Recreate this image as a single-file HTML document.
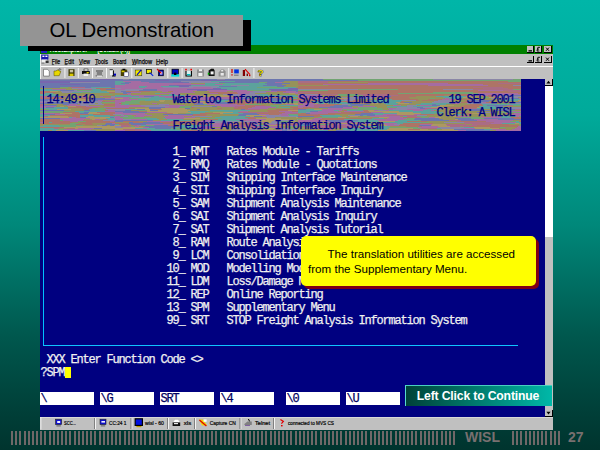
<!DOCTYPE html>
<html><head><meta charset="utf-8"><title>OL Demonstration</title>
<style>
html,body{margin:0;padding:0}
body{width:600px;height:450px;overflow:hidden;position:relative;font-family:"Liberation Sans",sans-serif;
background:linear-gradient(to bottom,rgb(0,182,168) 0px,rgb(0,170,154) 115px,rgb(0,136,122) 225px,rgb(0,88,78) 335px,rgb(0,62,55) 415px,rgb(0,52,46) 450px)}
div,svg{position:absolute}
.win{left:40px;top:45px;width:513px;height:385px;background:#c0c0c0}
.tbar{left:0;top:0;width:513px;height:9px;background:#008000}
.menu{left:0;top:9px;width:513px;height:12px;background:#c0c0c0}
.wline{left:0;top:21px;width:513px;height:1px;background:#fff}
.tool{left:0;top:22px;width:513px;height:12px;background:#c0c0c0}
.term{left:0;top:34px;width:505px;height:338px;background:#000080}
.scroll{left:505px;top:34px;width:8px;height:338px;background:#c0c0c0}
.scroll .wh{left:0;top:7px;width:8px;height:151px;background:#fff}
.task{left:0;top:372px;width:513px;height:13px;background:#c0c0c0}
.noise{left:40px;top:79px}
.wb{width:7px;height:7px;background:#c0c0c0;box-sizing:border-box;border-right:1px solid #000;border-bottom:1px solid #000}
.wb svg{left:0;top:0}
.sb{left:0;width:8px;height:7px;background:#c0c0c0;box-sizing:border-box;border-right:1px solid #000;border-bottom:1px solid #000}

.t{font-family:"Liberation Mono",monospace;font-size:12px;letter-spacing:-1.2px;line-height:13px;height:13px;white-space:pre;color:#f0f0f0;-webkit-text-stroke:0.25px}
.t.h{color:#000080}
.t.d{color:#000060}
.fld{top:392px;width:54px;height:13px;background:#fff}
.shadow{left:28px;top:20px;width:223px;height:31px;background:#000}
.title{left:20px;top:15px;width:223px;height:31px;background:#949494}
.title span{position:absolute;left:29.5px;top:3px;font-size:20.4px;line-height:24px;color:#000;white-space:nowrap}
.call-sh{left:304px;top:239px;width:235px;height:50px;border-radius:5px;background:#800014}
.call{left:301px;top:236px;width:235px;height:50px;border-radius:5px;background:#ffff00}
.call span{position:absolute;font-size:11.6px;line-height:14px;color:#000;white-space:nowrap}
.btn{left:405px;top:385px;width:147px;height:21px;background:linear-gradient(to right,#004238,#00b8a8);box-sizing:border-box;border-top:1px solid #48d0c0;border-left:1px solid #58d8d0}
.btn span{position:absolute;left:-1px;width:146px;top:3px;text-align:center;font-size:12.2px;letter-spacing:-0.16px;line-height:14px;font-weight:bold;color:#fff;white-space:nowrap}
.bars{top:431px;height:14px}
.ft{font-weight:bold;font-size:14px;line-height:16px;color:#787070;top:429px;white-space:nowrap}
</style></head><body>
<div style="left:40px;top:54px;width:1px;height:25px;background:#f0f0f0;z-index:1"></div>
<div class="win">
 <div class="tbar"></div>
 <div class="menu"></div>
 <div class="wline"></div>
 <div class="tool"></div>
 <div class="term"></div>
 <div class="scroll"><div class="wh"></div><div class="sb" style="top:0"><svg width="7" height="6" style="left:0;top:0"><path d="M3.5 1.8L5.6 4.4H1.4Z" fill="#000"/></svg></div><div class="sb" style="top:331px"><svg width="7" height="6" style="left:0;top:0"><path d="M3.5 4.4L5.6 1.8H1.4Z" fill="#000"/></svg></div></div>
 <div class="task"></div>
</div>
<div class="wb" style="left:527px;top:46px"><svg width="6" height="6"><rect x="1.5" y="4.2" width="3.5" height="1.3" fill="#000"/></svg></div><div class="wb" style="left:535px;top:46px"><svg width="6" height="6"><path d="M5 1.3H2.9L2 5H4.3M2.5 3.1H4" stroke="#000" stroke-width=".9" fill="none"/></svg></div><div class="wb" style="left:544px;top:46px;width:8px"><svg width="7" height="6"><path d="M2 1.6L5 4.8M5 1.6L2 4.8" stroke="#000" stroke-width="1" fill="none"/></svg></div><div class="wb" style="left:527px;top:56px"><svg width="6" height="6"><rect x="1.5" y="4.2" width="3.5" height="1.3" fill="#000"/></svg></div><div class="wb" style="left:535px;top:56px"><svg width="6" height="6"><path d="M5 1.3H2.9L2 5H4.3M2.5 3.1H4" stroke="#000" stroke-width=".9" fill="none"/></svg></div><div class="wb" style="left:544px;top:56px;width:8px"><svg width="7" height="6"><path d="M2 1.6L5 4.8M5 1.6L2 4.8" stroke="#000" stroke-width="1" fill="none"/></svg></div>
<svg style="left:40px;top:45px" width="230" height="21" viewBox="40 45 230 21" font-family="Liberation Sans">
<g fill="#fff" font-size="7" font-weight="bold"><text x="49.7" y="52" textLength="38" lengthAdjust="spacingAndGlyphs">HostExplorer</text><text x="94" y="52" textLength="36" lengthAdjust="spacingAndGlyphs">- [Default (A)]</text></g>
<rect x="41" y="47" width="6" height="6" fill="#2020c0"/><rect x="42" y="48" width="3" height="2" fill="#e0e0ff"/>
<rect x="41.2" y="54.6" width="7.2" height="5" fill="#1818b0"/><rect x="42.4" y="55.6" width="2" height="1.4" fill="#fff"/><rect x="45.4" y="55.6" width="2" height="1.4" fill="#fff"/><rect x="42" y="59.6" width="5" height="3" fill="#f0f0f0"/><rect x="45.6" y="60.6" width="3" height="2.4" fill="#303030"/><rect x="41.4" y="62.6" width="3" height="1" fill="#707070"/>
<g fill="#000" font-size="7.4" stroke="#000" stroke-width=".25"><text x="51.8" y="63.6" textLength="8.4" lengthAdjust="spacingAndGlyphs">File</text><text x="64.6" y="63.6" textLength="9.4" lengthAdjust="spacingAndGlyphs">Edit</text><text x="79" y="63.6" textLength="11" lengthAdjust="spacingAndGlyphs">View</text><text x="95" y="63.6" textLength="13" lengthAdjust="spacingAndGlyphs">Tools</text><text x="113" y="63.6" textLength="13.4" lengthAdjust="spacingAndGlyphs">Board</text><text x="132" y="63.6" textLength="20" lengthAdjust="spacingAndGlyphs">Window</text><text x="156" y="63.6" textLength="12" lengthAdjust="spacingAndGlyphs">Help</text></g>
<g stroke="#000" stroke-width=".6"><path d="M51.8 64.6h2.4M64.6 64.6h2.6M79 64.6h3M95 64.6h2.6M132 64.6h4M156 64.6h3"/></g>
</svg>

<svg style="left:40px;top:417px" width="513" height="13" viewBox="40 417 513 13" font-family="Liberation Sans">
<rect x="40" y="417" width="513" height="1" fill="#d8d8d8"/><rect x="40.4" y="417" width="1" height="12.5" fill="#f0f0f0"/>
<g fill="#f4f4f4"><rect x="95" y="418" width="1" height="11"/><rect x="131.4" y="418" width="1" height="11"/><rect x="168" y="418" width="1" height="11"/><rect x="195" y="418" width="1" height="11"/><rect x="240.4" y="418" width="1" height="11"/><rect x="274" y="418" width="1" height="11"/></g>
<g fill="#808080"><rect x="94" y="418" width="1" height="11"/><rect x="130.4" y="418" width="1" height="11"/><rect x="167" y="418" width="1" height="11"/><rect x="194" y="418" width="1" height="11"/><rect x="239.4" y="418" width="1" height="11"/><rect x="273" y="418" width="1" height="11"/></g>
<rect x="55.6" y="419.2" width="6" height="5.4" fill="#1010d0" stroke="#202020" stroke-width=".6"/><rect x="57.2" y="421" width="3" height="2" fill="#f0f0ff"/><rect x="56.4" y="425.4" width="4.4" height="1" fill="#606060"/>
<rect x="100" y="419.2" width="6" height="5.4" fill="#1010d0" stroke="#202020" stroke-width=".6"/><rect x="101.4" y="421" width="3.6" height="1.6" fill="#f0f0ff"/><rect x="100.8" y="425.4" width="4.4" height="1" fill="#606060"/>
<rect x="135.2" y="418.8" width="7.2" height="6.6" fill="#0010e0" stroke="#000" stroke-width="1.2"/><rect x="136.4" y="426" width="5" height="1.2" fill="#c0a000"/>
<path d="M173 422.4l2-2.6h3l2 2.6z" fill="#fff"/><rect x="172.6" y="422.4" width="7.6" height="3.6" fill="#101010"/><rect x="174" y="423" width="4" height="1.2" fill="#e8e8e8"/>
<path d="M199 419.4h4l4.4 6H202z" fill="#f0d800"/><path d="M199.4 420l7 6" stroke="#e00000" stroke-width="1.2"/><rect x="203.6" y="419.4" width="3" height="2.4" fill="#fff"/>
<path d="M244.4 424l3-2.6h4.4v3.6h-7.4z" fill="#808080"/><path d="M248.4 419l1.2 2.4" stroke="#000" stroke-width="1"/><rect x="245" y="425" width="5" height="1" fill="#8060a0"/>
<path d="M280.4 419.4l3 2-2 2.2" stroke="#e00000" stroke-width="1.2" fill="none"/><rect x="281" y="425" width="1.6" height="1.4" fill="#e00000"/>
<g fill="#000" font-size="5.6" stroke="#000" stroke-width=".2"><text x="64" y="425.2" textLength="12" lengthAdjust="spacingAndGlyphs">SCC...</text><text x="109" y="425.2" textLength="17.4" lengthAdjust="spacingAndGlyphs">CC:24 1</text><text x="145" y="425.2" textLength="19" lengthAdjust="spacingAndGlyphs">wisl - 60</text><text x="183.8" y="425.2" textLength="7.4" lengthAdjust="spacingAndGlyphs">xls</text><text x="209.8" y="425.2" textLength="26" lengthAdjust="spacingAndGlyphs">Capture CN</text><text x="255" y="425.2" textLength="15" lengthAdjust="spacingAndGlyphs">Telnet</text><text x="288" y="425.2" textLength="46" lengthAdjust="spacingAndGlyphs">connected to MVS CS</text></g>
</svg>

<svg style="left:40px;top:66px" width="230" height="13" viewBox="40 66 230 13">
<g fill="#f4f4f4"><rect x="64.4" y="68" width="1" height="10"/><rect x="77.8" y="68" width="1" height="10"/><rect x="92" y="68" width="1" height="10"/><rect x="106" y="68" width="1" height="10"/><rect x="131.3" y="68" width="1" height="10"/><rect x="167.3" y="68" width="1" height="10"/><rect x="181.6" y="68" width="1" height="10"/><rect x="228.2" y="68" width="1" height="10"/><rect x="253.4" y="68" width="1" height="10"/></g>
<path d="M43.5 69.3h4l1.8 1.8v5h-5.8z" fill="#fff" stroke="#505050" stroke-width=".6"/>
<path d="M54 71h2.2l.8-1h2v1h1.6v1l-1.4 3.7H54z" fill="#e8d800" stroke="#504800" stroke-width=".5"/>
<path d="M58.6 69.4l1.6-.6.8 1" stroke="#000" stroke-width=".6" fill="none"/>
<rect x="68.5" y="69.2" width="6" height="6.8" fill="#383400"/><rect x="69.8" y="69.8" width="3.4" height="2.6" fill="#c8c0a0"/><rect x="69.6" y="73.6" width="3.8" height="2.4" fill="#d8c800"/>
<rect x="84" y="69" width="4" height="2" fill="#fff" stroke="#000" stroke-width=".5"/><rect x="82" y="71" width="7.8" height="3" fill="#101010"/><rect x="83.6" y="73.6" width="4.6" height="2.4" fill="#f0f0f0"/><rect x="86.6" y="72" width="2.2" height="1.4" fill="#e0d000"/>
<path d="M96 70h7v2h-1v3h1v1.4h-7.4V75h1.2v-3H96z" fill="#808080"/><rect x="97" y="75.6" width="5.4" height="1.2" fill="#e8e8e8"/>
<path d="M109.6 69.6h3l1.2 1.2" stroke="#202020" stroke-width=".8" fill="none"/><rect x="110" y="70.6" width="3" height="4.6" fill="#f0f0f0"/><path d="M113.4 71v5M112 76h3.6" stroke="#000" stroke-width="1"/><rect x="113.8" y="73.6" width="2.2" height="2" fill="#0000c0"/>
<rect x="120.8" y="69.6" width="6.4" height="6.4" fill="#484000"/><rect x="122.4" y="68.8" width="3" height="1.6" fill="#000"/><rect x="124" y="72" width="4.4" height="4.6" fill="#fff" stroke="#202060" stroke-width=".5"/><rect x="121.6" y="70.6" width="3" height="1.6" fill="#d8c800"/>
<rect x="135.2" y="70" width="6.6" height="5.8" fill="#f0e800" stroke="#202020" stroke-width=".5"/><path d="M137 74.8l4.2-5" stroke="#0000d0" stroke-width="1.1"/>
<rect x="146.4" y="69.6" width="5" height="4" fill="#f0e800" stroke="#000" stroke-width=".7"/><path d="M149.6 72.4l3.6 3.4" stroke="#0020e0" stroke-width="1.1"/>
<rect x="158.4" y="70" width="5" height="5.8" fill="#0000a0" stroke="#000" stroke-width=".6"/><rect x="160" y="71.6" width="2.4" height="3" fill="#d0d0ff"/><path d="M157 69l4.4 4.4" stroke="#e00000" stroke-width="1.1"/>
<rect x="172" y="69.2" width="6.4" height="5" fill="#0000c0" stroke="#000" stroke-width=".7"/><rect x="171.2" y="74.4" width="8" height="2.2" fill="#00d8d8"/><rect x="174" y="72.6" width="2.4" height="2.4" fill="#000"/>
<rect x="185.2" y="68.8" width="1.6" height="1.6" fill="#f00000"/><rect x="190.4" y="68.8" width="1.6" height="1.6" fill="#f00000"/><path d="M186 71v5h5.4v-5" stroke="#000" stroke-width="1.1" fill="#d8f0f0"/><rect x="187" y="74" width="3.4" height="1.4" fill="#00c0c0"/>
<path d="M197 69.6h2v1.6h3v-1.6h2v6.8h-7z" fill="#909090"/><rect x="198.4" y="73" width="4" height="3" fill="#f0f0f0"/><rect x="199" y="69.4" width="3" height="1.6" fill="#f0f0f0"/>
<path d="M208.6 70.4l2.6-1.6h2.4l1 1.6v5.6h-6z" fill="#101010"/><rect x="210.6" y="71.4" width="3" height="3" fill="#f4f4f4"/><path d="M207.8 72.2v3l2.2-1.5z" fill="#00a000"/>
<path d="M218.6 72.4l2.4-3h3l1.6 2v5h-7z" fill="#909090"/><rect x="220.6" y="73" width="3.2" height="2.6" fill="#e8e8e8"/><rect x="221.2" y="70" width="2" height="1.4" fill="#e8e8e8"/>
<rect x="231.4" y="69" width="1.2" height="4" fill="#d00000"/><rect x="231.4" y="74.2" width="1.2" height="1.4" fill="#d00000"/><rect x="234.2" y="69.4" width="4.6" height="4" fill="#0030e0"/><path d="M234 75.2h4.6" stroke="#707070" stroke-width="1"/>
<rect x="242.8" y="70" width="2.2" height="6" fill="#800000"/><path d="M245 69.2l5 5.4" stroke="#e00000" stroke-width="1.1"/><rect x="246.6" y="73.6" width="1.4" height="2.4" fill="#800000"/><rect x="249" y="74.8" width="1.4" height="1.4" fill="#d00000"/>
<text x="257.8" y="76.2" font-family="Liberation Sans" font-weight="bold" font-size="9.5" fill="#f0e000" stroke="#000" stroke-width=".7" paint-order="stroke">?</text>
</svg>

<svg class="noise" width="481" height="52" viewBox="0 0 480 52" preserveAspectRatio="none" shape-rendering="crispEdges" fill="none" stroke-width="1"><path stroke="#96925a" d="M243 2.5h14M241 3.5h16M287 3.5h40M151 4.5h14M249 4.5h8M241 5.5h16M245 6.5h12M257 6.5h30M243 7.5h8M251 7.5h6M28 8.5h3M255 8.5h2M0 9.5h12M12 9.5h20M26 10.5h12M61 11.5h14M18 12.5h3M110 12.5h12M153 12.5h16M187 12.5h6M16 13.5h6M101 13.5h30M155 13.5h12M226 13.5h16M13 14.5h16M29 14.5h30M59 14.5h16M75 14.5h8M91 14.5h24M140 14.5h30M215 14.5h30M245 14.5h3M16 15.5h8M24 15.5h8M38 15.5h10M48 15.5h8M56 15.5h12M72 15.5h3M75 15.5h5M91 15.5h8M99 15.5h30M142 15.5h8M150 15.5h3M153 15.5h30M228 15.5h29M18 16.5h24M56 16.5h19M145 16.5h3M255 16.5h2M281 16.5h4M403 16.5h12M26 17.5h10M54 17.5h6M281 17.5h3M294 17.5h30M375 17.5h20M435 17.5h12M22 18.5h14M36 18.5h6M47 18.5h24M238 18.5h19M287 18.5h14M335 18.5h3M368 18.5h30M398 18.5h4M432 18.5h8M477 18.5h3M24 19.5h8M38 19.5h3M256 19.5h1M331 19.5h8M369 19.5h20M394 19.5h10M420 19.5h30M150 20.5h4M250 20.5h3M315 20.5h30M377 20.5h10M431 20.5h30M63 21.5h12M125 21.5h14M149 21.5h3M188 21.5h20M318 21.5h8M378 21.5h3M411 21.5h16M451 21.5h6M100 22.5h20M124 22.5h12M185 22.5h8M193 22.5h3M257 22.5h5M363 22.5h30M409 22.5h5M414 22.5h10M448 22.5h30M99 23.5h10M109 23.5h30M328 23.5h3M371 23.5h20M469 23.5h3M55 24.5h3M62 24.5h13M100 24.5h12M117 24.5h5M122 24.5h8M130 24.5h12M142 24.5h12M213 24.5h20M311 24.5h6M337 24.5h6M368 24.5h12M418 24.5h8M456 24.5h4M4 25.5h14M18 25.5h5M37 25.5h3M89 25.5h30M129 25.5h6M135 25.5h16M151 25.5h3M221 25.5h10M231 25.5h14M257 25.5h5M298 25.5h3M329 25.5h16M356 25.5h5M361 25.5h14M405 25.5h24M17 26.5h10M49 26.5h14M145 26.5h16M161 26.5h14M225 26.5h5M322 26.5h14M336 26.5h16M360 26.5h6M376 26.5h3M413 26.5h10M16 27.5h4M24 27.5h4M60 27.5h10M70 27.5h5M177 27.5h4M239 27.5h18M311 27.5h6M334 27.5h12M402 27.5h10M412 27.5h8M462 27.5h18M58 28.5h6M89 28.5h20M154 28.5h8M162 28.5h24M186 28.5h8M312 28.5h5M336 28.5h10M463 28.5h4M28 29.5h14M150 29.5h20M170 29.5h3M173 29.5h4M182 29.5h12M228 29.5h24M267 29.5h20M341 29.5h6M0 30.5h6M31 30.5h5M36 30.5h8M63 30.5h3M147 30.5h10M160 30.5h8M168 30.5h5M173 30.5h8M181 30.5h20M220 30.5h16M342 30.5h6M400 30.5h24M440 30.5h20M24 31.5h20M91 31.5h8M150 31.5h20M210 31.5h12M222 31.5h5M393 31.5h16M409 31.5h20M449 31.5h5M474 31.5h6M30 32.5h5M208 32.5h20M297 32.5h6M396 32.5h8M404 32.5h8M424 32.5h8M432 32.5h30M165 33.5h8M402 33.5h24M426 33.5h10M452 33.5h6M105 34.5h8M113 34.5h12M138 34.5h8M257 34.5h3M403 34.5h20M441 34.5h24M107 35.5h16M167 35.5h20M187 35.5h12M294 35.5h20M393 35.5h6M399 35.5h8M407 35.5h3M410 35.5h3M431 35.5h16M447 35.5h24M92 36.5h4M112 36.5h4M116 36.5h12M166 36.5h16M182 36.5h3M185 36.5h8M193 36.5h5M299 36.5h8M386 36.5h6M392 36.5h20M419 36.5h30M449 36.5h24M104 37.5h20M144 37.5h8M172 37.5h8M301 37.5h8M317 37.5h12M359 37.5h3M384 37.5h8M392 37.5h8M400 37.5h12M428 37.5h8M436 37.5h14M110 38.5h5M115 38.5h10M155 38.5h20M215 38.5h12M235 38.5h20M261 38.5h16M308 38.5h30M400 38.5h20M117 39.5h6M240 39.5h10M250 39.5h7M257 39.5h16M343 39.5h3M398 39.5h8M406 39.5h8M44 40.5h8M60 40.5h3M119 40.5h8M143 40.5h20M163 40.5h3M248 40.5h8M402 40.5h8M410 40.5h4M113 41.5h8M151 41.5h14M254 41.5h3M472 41.5h8M99 42.5h8M255 42.5h2M386 42.5h30M32 43.5h8M75 43.5h14M322 43.5h20M388 43.5h3M391 43.5h12M38 44.5h4M52 44.5h14M171 44.5h3M218 44.5h8M392 44.5h20M412 44.5h12M0 45.5h30M42 45.5h3M53 45.5h12M130 45.5h10M140 45.5h14M220 45.5h4M272 45.5h8M425 45.5h6M468 45.5h12M0 46.5h3M43 46.5h14M67 46.5h3M89 46.5h4M99 47.5h6M186 47.5h8M242 47.5h5M314 47.5h5M349 47.5h16M419 47.5h3M171 48.5h30M239 48.5h12M251 48.5h5M256 48.5h1M257 48.5h16M329 48.5h8M464 48.5h12M19 49.5h8M183 49.5h10M193 49.5h6M257 49.5h6M263 49.5h4M267 49.5h3M278 49.5h24M458 49.5h16M51 50.5h24M159 50.5h30M189 50.5h3M233 50.5h6M257 50.5h24M291 50.5h3M294 50.5h8M387 50.5h14M465 50.5h6M8 51.5h4M56 51.5h14M70 51.5h4M74 51.5h1M161 51.5h10M287 51.5h8M449 51.5h6"/><path stroke="#a56ca2" d="M83 2.5h18M91 3.5h18M235 3.5h6M89 4.5h24M113 4.5h14M127 4.5h24M327 4.5h80M85 5.5h40M125 5.5h40M175 5.5h8M282 5.5h80M362 5.5h80M75 6.5h40M115 6.5h6M121 6.5h8M387 6.5h60M75 7.5h24M107 7.5h14M75 8.5h14M89 8.5h10M105 8.5h18M153 8.5h18M81 9.5h14M95 9.5h24M119 9.5h40M159 9.5h14M12 10.5h14M75 10.5h10M117 10.5h30M117 11.5h40M167 11.5h40M437 11.5h25M122 12.5h3M125 12.5h3M133 12.5h10M143 12.5h4M147 12.5h6M169 12.5h12M181 12.5h6M193 12.5h20M225 12.5h4M229 12.5h8M245 12.5h10M91 13.5h10M131 13.5h12M143 13.5h12M197 13.5h10M207 13.5h3M242 13.5h15M87 14.5h4M120 14.5h20M170 14.5h8M198 14.5h5M203 14.5h6M254 14.5h3M437 14.5h40M88 15.5h3M135 15.5h3M199 15.5h5M427 15.5h53M91 16.5h30M148 16.5h12M257 16.5h24M427 16.5h14M441 16.5h6M455 16.5h5M22 17.5h4M60 17.5h3M99 17.5h5M119 17.5h3M122 17.5h8M130 17.5h14M144 17.5h16M257 17.5h24M452 17.5h6M75 18.5h16M125 18.5h24M149 18.5h24M173 18.5h30M257 18.5h30M32 19.5h6M65 19.5h10M83 19.5h6M133 19.5h8M151 19.5h10M161 19.5h6M167 19.5h14M181 19.5h20M269 19.5h14M404 19.5h4M478 19.5h2M80 20.5h8M88 20.5h10M159 20.5h6M165 20.5h16M201 20.5h12M401 20.5h12M479 20.5h1M58 21.5h5M75 21.5h16M251 21.5h3M254 21.5h3M257 21.5h8M75 22.5h10M169 22.5h4M216 22.5h10M0 23.5h5M75 23.5h6M149 23.5h14M169 23.5h5M442 23.5h3M75 24.5h4M112 24.5h5M167 24.5h8M262 24.5h10M410 24.5h8M29 25.5h8M75 25.5h6M167 25.5h30M245 25.5h8M262 25.5h14M27 26.5h6M33 26.5h8M75 26.5h12M87 26.5h14M125 26.5h20M175 26.5h30M257 26.5h16M352 26.5h8M379 26.5h12M0 27.5h16M46 27.5h14M75 27.5h20M95 27.5h10M129 27.5h8M137 27.5h3M181 27.5h14M215 27.5h16M257 27.5h16M317 27.5h5M322 27.5h12M0 28.5h6M64 28.5h11M75 28.5h14M125 28.5h14M212 28.5h24M257 28.5h5M302 28.5h10M208 29.5h20M287 29.5h30M347 29.5h8M281 30.5h20M348 30.5h4M366 30.5h20M68 31.5h7M281 31.5h12M298 31.5h3M333 31.5h4M345 31.5h3M372 31.5h10M390 31.5h3M65 32.5h10M200 32.5h8M239 32.5h12M277 32.5h20M303 32.5h16M319 32.5h4M470 32.5h10M75 33.5h8M107 33.5h20M244 33.5h13M270 33.5h30M330 33.5h12M0 34.5h6M6 34.5h8M75 34.5h30M241 34.5h8M269 34.5h4M273 34.5h6M279 34.5h5M284 34.5h3M473 34.5h7M15 35.5h10M83 35.5h24M219 35.5h10M239 35.5h8M342 35.5h14M373 35.5h6M471 35.5h6M477 35.5h3M96 36.5h16M128 36.5h24M240 36.5h8M334 36.5h12M473 36.5h6M479 36.5h1M75 37.5h8M94 37.5h10M124 37.5h12M136 37.5h8M222 37.5h4M329 37.5h30M416 37.5h12M450 37.5h6M475 37.5h3M32 38.5h4M74 38.5h1M75 38.5h5M125 38.5h30M348 38.5h14M388 38.5h6M440 38.5h20M20 39.5h30M75 39.5h8M126 39.5h10M136 39.5h8M273 39.5h8M346 39.5h20M20 40.5h24M55 40.5h5M75 40.5h8M91 40.5h16M196 40.5h30M271 40.5h8M333 40.5h30M433 40.5h24M23 41.5h20M165 41.5h8M206 41.5h16M257 41.5h30M337 41.5h20M436 41.5h6M442 41.5h30M30 42.5h8M70 42.5h4M107 42.5h24M161 42.5h8M215 42.5h4M257 42.5h24M284 42.5h4M304 42.5h8M445 42.5h12M457 42.5h12M0 43.5h3M207 43.5h20M257 43.5h6M289 43.5h30M453 43.5h8M461 43.5h14M72 44.5h3M174 44.5h20M317 44.5h12M336 44.5h20M450 44.5h3M453 44.5h8M106 45.5h24M172 45.5h12M214 45.5h6M224 45.5h12M296 45.5h24M344 45.5h3M347 45.5h6M379 45.5h12M74 46.5h1M97 46.5h4M170 46.5h14M249 46.5h8M305 46.5h6M317 46.5h5M346 46.5h12M95 47.5h4M159 47.5h24M218 47.5h24M281 47.5h3M381 47.5h16M477 47.5h3M103 48.5h6M157 48.5h4M161 48.5h10M231 48.5h8M321 48.5h3M377 48.5h8M385 48.5h14M476 48.5h4M38 49.5h16M151 49.5h24M175 49.5h8M199 49.5h3M322 49.5h10M420 49.5h14M474 49.5h6M24 50.5h3M27 50.5h24M281 50.5h10M451 50.5h14M471 50.5h9M75 51.5h10M221 51.5h20M417 51.5h8M455 51.5h5M460 51.5h10M470 51.5h10"/><path stroke="#5ca29c" d="M75 2.5h8M171 2.5h24M75 3.5h10M75 4.5h6M165 4.5h14M185 4.5h40M75 5.5h10M165 5.5h10M183 5.5h30M213 5.5h14M151 6.5h40M209 6.5h14M99 7.5h8M121 7.5h18M197 7.5h40M51 8.5h20M99 8.5h6M177 8.5h40M241 8.5h14M181 9.5h8M189 9.5h40M229 9.5h18M0 10.5h12M52 10.5h8M187 10.5h10M197 10.5h8M205 10.5h24M0 11.5h20M53 11.5h8M51 12.5h16M32 13.5h10M50 13.5h5M55 13.5h14M5 14.5h8M115 14.5h5M0 15.5h16M129 15.5h6M218 15.5h10M0 16.5h10M10 16.5h8M75 16.5h16M121 16.5h16M137 16.5h8M220 16.5h5M225 16.5h30M75 17.5h24M114 17.5h5M226 17.5h8M248 17.5h9M395 17.5h30M111 18.5h14M402 18.5h20M109 19.5h24M251 19.5h5M408 19.5h12M98 20.5h24M122 20.5h10M147 20.5h3M273 20.5h24M345 20.5h6M467 20.5h12M105 21.5h6M115 21.5h4M176 21.5h12M239 21.5h12M279 21.5h10M289 21.5h3M292 21.5h12M331 21.5h30M457 21.5h20M28 22.5h3M31 22.5h3M136 22.5h6M142 22.5h3M173 22.5h12M231 22.5h16M270 22.5h30M330 22.5h30M236 23.5h8M275 23.5h30M331 23.5h24M277 24.5h6M287 24.5h24M343 24.5h14M380 24.5h30M85 25.5h4M164 25.5h3M345 25.5h3M348 25.5h8M375 25.5h16M395 25.5h10M441 25.5h20M461 25.5h8M469 25.5h11M240 26.5h12M252 26.5h5M442 26.5h4M346 27.5h20M372 27.5h24M438 27.5h10M448 27.5h6M14 28.5h14M241 28.5h8M333 28.5h3M439 28.5h24M0 29.5h4M4 29.5h24M436 29.5h30M9 30.5h8M49 30.5h6M85 30.5h12M265 30.5h8M386 30.5h14M50 31.5h5M170 31.5h24M194 31.5h16M257 31.5h24M293 31.5h5M306 31.5h16M348 31.5h24M382 31.5h8M35 32.5h30M148 32.5h20M184 32.5h16M257 32.5h12M358 32.5h24M382 32.5h14M412 32.5h12M39 33.5h5M151 33.5h14M193 33.5h5M257 33.5h8M372 33.5h30M150 34.5h10M183 34.5h20M332 34.5h24M380 34.5h8M388 34.5h5M0 35.5h3M49 35.5h4M334 35.5h8M413 35.5h10M0 36.5h10M40 36.5h16M56 36.5h10M66 36.5h4M248 36.5h9M279 36.5h20M322 36.5h4M0 37.5h4M40 37.5h3M43 37.5h5M54 37.5h21M180 37.5h30M256 37.5h1M281 37.5h8M289 37.5h12M362 37.5h4M461 37.5h14M29 38.5h3M175 38.5h30M460 38.5h10M66 39.5h9M105 39.5h12M123 39.5h3M160 39.5h8M182 39.5h5M187 39.5h5M192 39.5h16M331 39.5h12M68 40.5h7M107 40.5h4M111 40.5h8M127 40.5h16M178 40.5h10M188 40.5h8M303 40.5h30M121 41.5h30M173 41.5h30M317 41.5h6M323 41.5h14M357 41.5h4M361 41.5h16M312 42.5h12M324 42.5h6M330 42.5h8M354 42.5h12M475 42.5h3M9 43.5h3M319 43.5h3M342 43.5h30M372 43.5h8M475 43.5h5M329 44.5h3M356 44.5h6M461 44.5h5M466 44.5h8M478 44.5h2M75 45.5h4M168 45.5h4M3 46.5h16M101 46.5h5M140 46.5h30M216 46.5h10M257 46.5h12M0 47.5h20M139 47.5h6M145 47.5h14M319 47.5h30M133 48.5h24M337 48.5h10M423 48.5h10M0 49.5h14M95 49.5h20M302 49.5h20M332 49.5h16M396 49.5h4M0 50.5h4M4 50.5h14M107 50.5h30M302 50.5h30M332 50.5h14M443 50.5h8M0 51.5h8M12 51.5h4M28 51.5h16M111 51.5h30M257 51.5h30M309 51.5h20M329 51.5h8"/><path stroke="#6c76ae" d="M30 0.5h30M75 0.5h8M89 0.5h14M103 0.5h30M133 0.5h14M147 0.5h30M185 0.5h6M191 0.5h30M221 0.5h14M235 0.5h10M245 0.5h10M255 0.5h2M257 0.5h25M0 1.5h20M20 1.5h40M60 1.5h15M75 1.5h40M129 1.5h14M143 1.5h18M185 1.5h18M203 1.5h8M211 1.5h30M241 1.5h16M257 1.5h60M60 2.5h15M101 2.5h40M195 2.5h40M235 2.5h8M60 3.5h15M85 3.5h6M109 3.5h24M143 3.5h6M179 3.5h40M227 3.5h8M0 4.5h40M40 4.5h35M81 4.5h8M225 4.5h24M0 5.5h20M40 5.5h30M70 5.5h5M227 5.5h14M0 6.5h20M20 6.5h20M40 6.5h35M129 6.5h8M223 6.5h8M231 6.5h14M0 7.5h30M30 7.5h40M70 7.5h5M179 7.5h18M237 7.5h6M0 8.5h8M8 8.5h12M45 8.5h6M71 8.5h4M66 10.5h9M103 10.5h14M20 11.5h14M99 11.5h18M251 11.5h6M81 12.5h5M255 12.5h2M83 13.5h4M87 13.5h4M83 14.5h4M460 16.5h20M8 17.5h14M104 17.5h10M344 17.5h6M53 19.5h12M201 19.5h14M231 19.5h8M470 19.5h8M0 20.5h24M54 20.5h21M132 20.5h10M181 20.5h12M193 20.5h8M213 20.5h10M223 20.5h24M0 21.5h8M49 21.5h4M53 21.5h5M139 21.5h5M144 21.5h5M152 21.5h24M208 21.5h20M231 21.5h8M326 21.5h5M427 21.5h24M434 22.5h6M440 22.5h3M443 22.5h5M5 23.5h30M139 23.5h10M174 23.5h16M363 23.5h8M475 23.5h5M0 24.5h20M20 24.5h8M28 24.5h10M157 24.5h6M175 24.5h6M181 24.5h8M233 24.5h8M23 25.5h6M154 25.5h10M309 25.5h20M391 25.5h4M3 26.5h14M293 26.5h14M310 26.5h12M391 26.5h8M446 26.5h20M172 27.5h5M289 27.5h10M299 27.5h12M454 27.5h8M6 28.5h8M109 28.5h8M117 28.5h8M278 28.5h24M376 28.5h6M109 29.5h12M145 29.5h5M379 29.5h5M97 30.5h8M157 30.5h3M201 30.5h4M257 30.5h8M424 30.5h16M460 30.5h14M0 31.5h24M44 31.5h6M85 31.5h6M110 31.5h8M429 31.5h4M433 31.5h16M454 31.5h14M75 32.5h24M269 32.5h8M44 33.5h5M83 33.5h24M436 33.5h6M40 34.5h8M203 34.5h14M265 34.5h4M320 34.5h12M3 35.5h12M123 35.5h30M199 35.5h20M314 35.5h20M198 36.5h8M319 36.5h3M326 36.5h8M214 37.5h8M257 37.5h16M40 38.5h6M70 38.5h4M0 39.5h20M374 39.5h24M414 39.5h16M443 39.5h30M373 40.5h5M378 40.5h24M417 40.5h16M457 40.5h23M75 41.5h30M105 41.5h8M287 41.5h30M380 41.5h8M388 41.5h20M420 41.5h16M75 42.5h8M288 42.5h16M89 43.5h4M103 43.5h3M106 43.5h14M267 43.5h6M66 44.5h6M89 44.5h4M93 44.5h30M214 44.5h4M240 44.5h5M265 44.5h4M65 45.5h10M91 45.5h12M103 45.5h3M260 45.5h12M62 46.5h5M70 46.5h4M114 46.5h14M311 46.5h6M378 46.5h12M105 47.5h30M109 48.5h24M324 48.5h5M54 49.5h8M115 49.5h16M413 50.5h30M44 51.5h12M241 51.5h5M295 51.5h14M425 51.5h24"/><path stroke="#ad7466" d="M287 2.5h60M347 2.5h60M407 2.5h60M327 3.5h60M387 3.5h60M447 3.5h30M477 3.5h3M257 4.5h30M287 4.5h40M407 4.5h25M432 4.5h25M257 5.5h25M442 5.5h38M287 6.5h40M327 6.5h60M447 6.5h25M257 7.5h30M287 7.5h60M347 7.5h60M407 7.5h30M437 7.5h20M457 7.5h23M257 8.5h60M317 8.5h25M342 8.5h20M362 8.5h30M392 8.5h20M412 8.5h20M462 8.5h18M56 9.5h19M257 9.5h60M317 9.5h25M342 9.5h25M367 9.5h30M397 9.5h25M422 9.5h20M467 9.5h13M60 10.5h6M357 10.5h20M377 10.5h25M287 11.5h60M347 11.5h30M377 11.5h20M397 11.5h40M0 12.5h10M86 12.5h24M128 12.5h5M237 12.5h8M257 12.5h60M317 12.5h30M347 12.5h40M387 12.5h80M0 13.5h16M69 13.5h6M167 13.5h30M277 13.5h25M302 13.5h30M332 13.5h60M432 13.5h30M462 13.5h18M0 14.5h5M178 14.5h8M186 14.5h12M257 14.5h20M277 14.5h80M477 14.5h3M80 15.5h8M347 15.5h80M285 16.5h10M357 16.5h30M387 16.5h8M395 16.5h8M415 16.5h12M447 16.5h8M63 17.5h8M284 17.5h10M350 17.5h20M370 17.5h5M447 17.5h5M8 18.5h14M218 18.5h20M338 18.5h30M0 19.5h24M41 19.5h12M215 19.5h16M239 19.5h12M257 19.5h12M339 19.5h6M345 19.5h24M75 20.5h5M154 20.5h5M247 20.5h3M253 20.5h4M257 20.5h16M351 20.5h6M357 20.5h20M387 20.5h14M413 20.5h8M421 20.5h10M228 21.5h3M265 21.5h14M312 21.5h6M375 21.5h3M381 21.5h16M62 22.5h3M196 22.5h20M262 22.5h8M300 22.5h30M360 22.5h3M424 22.5h10M190 23.5h14M204 23.5h12M263 23.5h12M317 23.5h5M322 23.5h6M359 23.5h4M420 23.5h8M445 23.5h24M79 24.5h3M154 24.5h3M189 24.5h24M64 25.5h11M197 25.5h8M286 25.5h12M429 25.5h12M63 26.5h12M205 26.5h20M285 26.5h8M423 26.5h16M439 26.5h3M36 27.5h10M200 27.5h12M212 27.5h3M420 27.5h8M428 27.5h10M28 28.5h30M151 28.5h3M198 28.5h14M249 28.5h8M262 28.5h8M406 28.5h30M42 29.5h10M66 29.5h9M75 29.5h20M177 29.5h5M194 29.5h14M252 29.5h5M257 29.5h10M400 29.5h24M466 29.5h4M44 30.5h5M110 30.5h12M236 30.5h21M65 31.5h3M227 31.5h20M301 31.5h5M322 31.5h5M99 32.5h8M228 32.5h6M234 32.5h5M251 32.5h6M323 32.5h5M23 33.5h16M57 33.5h14M71 33.5h4M228 33.5h16M300 33.5h30M32 34.5h8M60 34.5h8M68 34.5h7M125 34.5h8M160 34.5h20M217 34.5h24M260 34.5h5M287 34.5h30M317 34.5h3M423 34.5h8M465 34.5h8M25 35.5h24M53 35.5h16M69 35.5h4M153 35.5h14M229 35.5h10M257 35.5h12M277 35.5h12M289 35.5h5M379 35.5h14M423 35.5h8M10 36.5h30M70 36.5h5M152 36.5h14M257 36.5h8M265 36.5h14M28 37.5h12M273 37.5h8M36 38.5h4M205 38.5h6M257 38.5h4M362 38.5h14M470 38.5h10M208 39.5h8M281 39.5h20M301 39.5h30M473 39.5h7M0 40.5h20M63 40.5h5M166 40.5h12M279 40.5h24M0 41.5h6M6 41.5h14M43 41.5h20M0 42.5h30M46 42.5h24M74 42.5h1M83 42.5h16M131 42.5h30M366 42.5h20M419 42.5h20M439 42.5h6M478 42.5h2M3 43.5h6M12 43.5h6M18 43.5h14M40 43.5h12M52 43.5h23M93 43.5h10M120 43.5h30M150 43.5h3M153 43.5h12M203 43.5h4M263 43.5h4M0 44.5h30M42 44.5h10M75 44.5h14M123 44.5h8M131 44.5h5M136 44.5h5M141 44.5h30M194 44.5h20M269 44.5h24M362 44.5h30M36 45.5h6M45 45.5h8M79 45.5h6M85 45.5h6M154 45.5h14M184 45.5h30M236 45.5h20M256 45.5h1M288 45.5h8M359 45.5h20M448 45.5h20M128 46.5h12M184 46.5h8M246 46.5h3M358 46.5h6M364 46.5h4M368 46.5h10M436 46.5h12M448 46.5h30M135 47.5h4M183 47.5h3M365 47.5h16M428 47.5h24M452 47.5h5M457 47.5h20M0 48.5h24M317 48.5h4M449 48.5h10M27 49.5h8M367 50.5h12M85 51.5h10M141 51.5h20M171 51.5h20"/><path stroke="#72a472" d="M282 0.5h80M362 0.5h30M472 0.5h8M317 1.5h25M342 1.5h80M422 1.5h40M462 1.5h18M467 2.5h13M219 3.5h8M179 4.5h6M20 8.5h8M217 8.5h24M317 10.5h40M472 10.5h8M37 11.5h16M207 11.5h24M257 11.5h30M42 13.5h8M392 13.5h40M357 14.5h80M68 15.5h4M297 15.5h20M298 16.5h24M206 17.5h20M207 18.5h3M210 18.5h5M215 18.5h3M440 18.5h8M89 19.5h20M389 19.5h5M91 21.5h14M111 21.5h4M34 22.5h4M85 22.5h12M97 22.5h3M247 22.5h10M61 23.5h14M81 23.5h10M91 23.5h8M244 23.5h13M305 23.5h12M82 24.5h8M90 24.5h4M94 24.5h6M460 24.5h8M81 25.5h4M205 25.5h16M230 26.5h10M307 26.5h3M472 26.5h8M140 27.5h12M231 27.5h8M139 28.5h4M143 28.5h8M236 28.5h5M317 28.5h16M346 28.5h10M52 29.5h14M317 29.5h24M6 30.5h3M55 30.5h8M301 30.5h20M321 30.5h5M326 30.5h16M55 31.5h10M99 31.5h8M468 31.5h6M0 32.5h30M168 32.5h16M462 32.5h8M0 33.5h3M3 33.5h20M458 33.5h22M146 34.5h4M393 34.5h10M247 35.5h10M75 36.5h6M84 36.5h8M88 37.5h6M376 37.5h8M478 37.5h2M80 38.5h30M277 38.5h20M305 38.5h3M380 38.5h8M420 38.5h20M83 39.5h6M89 39.5h12M101 39.5h4M168 39.5h14M366 39.5h8M430 39.5h5M435 39.5h8M257 40.5h4M363 40.5h10M20 41.5h3M377 41.5h3M38 42.5h8M240 42.5h10M469 42.5h6M239 43.5h8M380 43.5h8M30 44.5h8M30 45.5h6M280 45.5h8M19 46.5h24M106 46.5h8M478 46.5h2M20 47.5h16M91 47.5h4M247 47.5h10M219 48.5h12M347 48.5h30M459 48.5h5M131 49.5h20M234 49.5h3M249 49.5h8M372 49.5h8M18 50.5h6M137 50.5h5M142 50.5h14M211 51.5h10"/><path stroke="#8a86a6" d="M0 0.5h30M83 0.5h6M177 0.5h8M392 0.5h80M141 2.5h30M30 3.5h30M149 3.5h30M191 6.5h18M472 6.5h8M149 7.5h30M123 8.5h30M171 8.5h6M32 9.5h24M75 9.5h6M85 10.5h18M257 10.5h60M402 10.5h30M34 11.5h3M75 11.5h24M21 12.5h30M75 12.5h6M213 12.5h12M22 13.5h10M75 13.5h8M210 13.5h16M209 14.5h6M183 15.5h16M204 15.5h14M257 15.5h20M190 16.5h30M71 17.5h4M202 17.5h4M234 17.5h14M458 17.5h22M71 18.5h4M91 18.5h20M203 18.5h4M301 18.5h30M460 18.5h3M463 18.5h14M141 19.5h10M307 19.5h24M450 19.5h20M142 20.5h5M303 20.5h12M461 20.5h6M8 21.5h16M304 21.5h8M361 21.5h14M397 21.5h14M0 22.5h4M4 22.5h8M12 22.5h8M38 22.5h24M393 22.5h16M478 22.5h2M35 23.5h12M47 23.5h14M391 23.5h5M396 23.5h24M428 23.5h14M472 23.5h3M38 24.5h5M43 24.5h12M58 24.5h4M426 24.5h16M442 24.5h14M468 24.5h12M40 25.5h24M119 25.5h10M301 25.5h8M41 26.5h8M101 26.5h24M366 26.5h10M105 27.5h24M152 27.5h20M366 27.5h6M356 28.5h20M382 28.5h8M467 28.5h13M355 29.5h12M367 29.5h12M470 29.5h10M66 30.5h9M75 30.5h10M352 30.5h6M358 30.5h8M75 31.5h10M337 31.5h8M265 33.5h5M442 33.5h10M73 35.5h2M75 35.5h8M81 36.5h3M226 36.5h14M307 36.5h12M376 36.5h10M416 36.5h3M83 37.5h5M152 37.5h20M226 37.5h30M456 37.5h5M227 38.5h8M83 40.5h8M256 40.5h1M63 41.5h12M234 41.5h20M169 42.5h30M199 42.5h4M203 42.5h12M232 42.5h8M165 43.5h24M231 43.5h4M235 43.5h4M273 43.5h10M283 43.5h6M403 43.5h20M226 44.5h14M257 44.5h8M257 45.5h3M353 45.5h6M57 46.5h5M75 47.5h6M75 48.5h8M399 48.5h24M237 49.5h12M400 49.5h20M156 50.5h3M192 50.5h3M195 50.5h24M239 50.5h18M191 51.5h20M246 51.5h5"/><path stroke="#aa6c84" d="M257 2.5h30M257 3.5h30M457 4.5h23M31 8.5h14M432 8.5h30M442 9.5h25M38 10.5h14M432 10.5h40M462 11.5h18M467 12.5h13M257 13.5h20M277 15.5h20M317 15.5h30M322 16.5h5M327 16.5h30M0 17.5h8M36 17.5h10M324 17.5h20M0 18.5h8M42 18.5h5M331 18.5h4M297 20.5h6M65 22.5h10M226 22.5h5M216 23.5h20M257 23.5h6M257 24.5h5M0 25.5h4M276 25.5h10M0 26.5h3M273 26.5h12M466 26.5h6M195 27.5h5M273 27.5h16M194 28.5h4M270 28.5h8M384 29.5h12M424 29.5h12M205 30.5h10M215 30.5h5M474 30.5h6M198 33.5h30M14 34.5h6M249 34.5h8M269 35.5h8M346 36.5h30M4 37.5h4M366 37.5h10M211 38.5h4M376 38.5h4M203 41.5h3M408 41.5h12M416 42.5h3M423 43.5h30M245 44.5h12M424 44.5h10M434 44.5h16M405 45.5h20M431 45.5h8M439 45.5h6M445 45.5h3M81 46.5h8M93 46.5h4M192 46.5h24M269 46.5h24M293 46.5h12M406 46.5h30M81 47.5h10M194 47.5h24M257 47.5h24M284 47.5h30M409 47.5h10M422 47.5h6M209 48.5h10M273 48.5h30M303 48.5h14M14 49.5h5M270 49.5h8M380 49.5h16M83 50.5h24M95 51.5h16M251 51.5h6"/><path stroke="#ac9862" d="M10 12.5h8M67 12.5h8M248 14.5h6M32 15.5h6M138 15.5h4M42 16.5h14M160 16.5h30M295 16.5h3M46 17.5h8M160 17.5h12M172 17.5h30M425 17.5h10M422 18.5h10M448 18.5h12M75 19.5h8M283 19.5h24M24 20.5h10M34 20.5h20M24 21.5h5M29 21.5h16M45 21.5h4M119 21.5h6M477 21.5h3M20 22.5h8M120 22.5h4M145 22.5h24M163 23.5h6M355 23.5h4M163 24.5h4M241 24.5h16M272 24.5h5M283 24.5h4M317 24.5h20M357 24.5h3M360 24.5h8M253 25.5h4M399 26.5h14M20 27.5h4M28 27.5h8M396 27.5h6M390 28.5h16M436 28.5h3M95 29.5h14M121 29.5h24M396 29.5h4M17 30.5h14M105 30.5h5M122 30.5h3M125 30.5h6M131 30.5h16M273 30.5h8M107 31.5h3M118 31.5h8M126 31.5h16M142 31.5h8M247 31.5h10M327 31.5h6M107 32.5h30M137 32.5h6M143 32.5h5M328 32.5h30M49 33.5h8M127 33.5h24M173 33.5h20M342 33.5h30M20 34.5h12M48 34.5h12M133 34.5h5M180 34.5h3M356 34.5h24M431 34.5h6M437 34.5h4M356 35.5h3M359 35.5h14M206 36.5h20M412 36.5h4M8 37.5h20M48 37.5h6M210 37.5h4M309 37.5h8M412 37.5h4M0 38.5h24M24 38.5h5M46 38.5h24M255 38.5h2M297 38.5h8M338 38.5h10M394 38.5h6M50 39.5h16M144 39.5h16M216 39.5h24M52 40.5h3M226 40.5h8M234 40.5h14M261 40.5h10M414 40.5h3M222 41.5h12M219 42.5h10M229 42.5h3M250 42.5h5M281 42.5h3M338 42.5h16M189 43.5h14M227 43.5h4M247 43.5h10M293 44.5h24M332 44.5h4M474 44.5h4M320 45.5h24M391 45.5h14M75 46.5h6M226 46.5h20M322 46.5h24M390 46.5h16M36 47.5h30M66 47.5h5M71 47.5h4M397 47.5h12M24 48.5h30M54 48.5h14M68 48.5h7M83 48.5h20M201 48.5h8M433 48.5h16M35 49.5h3M62 49.5h8M70 49.5h5M75 49.5h16M91 49.5h4M202 49.5h8M210 49.5h24M348 49.5h24M434 49.5h24M75 50.5h8M219 50.5h14M346 50.5h5M351 50.5h16M379 50.5h8M401 50.5h12M16 51.5h12M337 51.5h30M367 51.5h30M397 51.5h20"/><path stroke="#7866ae" d="M60 0.5h15M115 1.5h14M161 1.5h24M0 2.5h40M40 2.5h20M0 3.5h30M133 3.5h10M20 5.5h20M137 6.5h14M139 7.5h10M173 9.5h8M247 9.5h10M147 10.5h40M229 10.5h14M243 10.5h14M157 11.5h10M231 11.5h10M241 11.5h10"/></svg>
<div style="left:43px;top:86px;width:1px;height:38px;background:#000080"></div>
<div style="left:43px;top:137px;width:1px;height:209px;background:#00c0ff"></div>
<div style="left:43px;top:345px;width:475px;height:1.2px;background:#10c4ff"></div>
<div style="left:64.5px;top:367px;width:6px;height:11px;background:#ffff00"></div>
<div class="fld" style="left:40px"></div>
<div class="fld" style="left:100px"></div>
<div class="fld" style="left:160px"></div>
<div class="fld" style="left:220px"></div>
<div class="fld" style="left:286px"></div>
<div class="fld" style="left:346px"></div>
<div class="t h" style="left:46.5px;top:94px">14:49:10</div>
<div class="t h" style="left:172.5px;top:94px">Waterloo Information Systems Limited</div>
<div class="t h" style="left:448.5px;top:94px">19 SEP 2001</div>
<div class="t h" style="left:436.5px;top:107px">Clerk: A WISL</div>
<div class="t h" style="left:172.5px;top:120px">Freight Analysis Information System</div>
<div class="t " style="left:166.5px;top:146px"> 1_ RMT   Rates Module - Tariffs</div>
<div class="t " style="left:166.5px;top:159px"> 2_ RMQ   Rates Module - Quotations</div>
<div class="t " style="left:166.5px;top:172px"> 3_ SIM   Shipping Interface Maintenance</div>
<div class="t " style="left:166.5px;top:185px"> 4_ SII   Shipping Interface Inquiry</div>
<div class="t " style="left:166.5px;top:198px"> 5_ SAM   Shipment Analysis Maintenance</div>
<div class="t " style="left:166.5px;top:211px"> 6_ SAI   Shipment Analysis Inquiry</div>
<div class="t " style="left:166.5px;top:224px"> 7_ SAT   Shipment Analysis Tutorial</div>
<div class="t " style="left:166.5px;top:237px"> 8_ RAM   Route Analysis Maintenance</div>
<div class="t " style="left:166.5px;top:250px"> 9_ LCM   Consolidation Maintenance</div>
<div class="t " style="left:166.5px;top:263px">10_ MOD   Modelling Module</div>
<div class="t " style="left:166.5px;top:276px">11_ LDM   Loss/Damage Module</div>
<div class="t " style="left:166.5px;top:289px">12_ REP   Online Reporting</div>
<div class="t " style="left:166.5px;top:302px">13_ SPM   Supplementary Menu</div>
<div class="t " style="left:166.5px;top:315px">99_ SRT   STOP Freight Analysis Information System</div>
<div class="t " style="left:46.5px;top:354px">XXX Enter Function Code &lt;&gt;</div>
<div class="t " style="left:40.5px;top:367px">?SPM</div>
<div class="t d" style="left:40.5px;top:393px">\</div>
<div class="t d" style="left:100.5px;top:393px">\G</div>
<div class="t d" style="left:160.5px;top:393px">SRT</div>
<div class="t d" style="left:220.5px;top:393px">\4</div>
<div class="t d" style="left:286.5px;top:393px">\0</div>
<div class="t d" style="left:346.5px;top:393px">\U</div>
<div class="call-sh"></div>
<div class="call"><span style="left:26.5px;top:11px">The translation utilities are accessed</span><span style="left:7px;top:25.5px">from the Supplementary Menu.</span></div>
<div class="btn"><span>Left Click to Continue</span></div>
<div class="shadow"></div>
<div class="title"><span>OL Demonstration</span></div>
<div class="bars" style="left:10.8px;width:446px;background:repeating-linear-gradient(to right,#706868 0,#706868 2px,transparent 2px,transparent 4.17px)"></div>
<div class="bars" style="left:512px;width:48px;background:repeating-linear-gradient(to right,#706868 0,#706868 2px,transparent 2px,transparent 4.17px)"></div>
<div class="ft" style="left:465px">WISL</div>
<div class="ft" style="left:568px">27</div>
</body></html>
